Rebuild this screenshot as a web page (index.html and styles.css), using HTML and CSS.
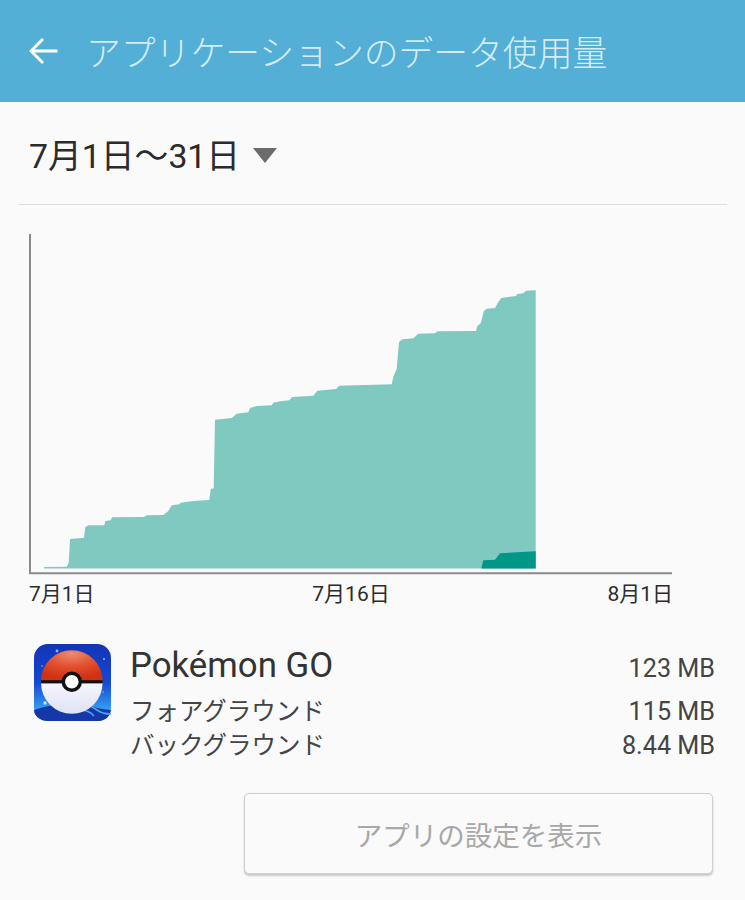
FILE: index.html
```html
<!DOCTYPE html>
<html lang="ja">
<head>
    <meta charset="UTF-8">
    <meta name="viewport" content="width=device-width, initial-scale=1.0">
    <title>アプリケーションのデータ使用量</title>
    <link rel="stylesheet" href="styles.css">
</head>
<body>

    <!-- Barra superior -->
    <header class="appbar">
        <svg class="back" width="30" height="30" viewBox="0 0 30 30">
            <path d="M28.5 15H2.5M14 3L2 15l12 12" fill="none" stroke="#fff" stroke-width="3"/>
        </svg>
        <h1>アプリケーションのデータ使用量</h1>
    </header>

    <div class="period">
        <span>7月1日〜31日</span>
        <i class="caret"></i>
    </div>

    <!-- Gráfico: el viewBox usa las coordenadas de la pantalla -->
    <svg class="chart" width="745" height="372" viewBox="0 205 745 372">
        <path fill="#80c9c1" d="M44 567L66.7 566.7L68.7 563L70 539L84 537.7L85.3 527L88.3 525.3L104.3 525.3L105.3 521L110.7 520.3L112 517.3L144 517L146.7 515.3L163.3 515L168.3 511L171.7 505.3L179.3 504.3L180.7 502.7L193.3 501L209.3 500L210.7 489L213.7 488.3L215 419.7L231.7 418L236.7 413.7L248.3 412.3L250 408L256.7 406L271.7 405.3L273.3 402.7L280 401.3L289.3 400.3L292 397L313.3 395.7L317.3 390.7L336 389L339.3 385.7L391.7 384.3L393.3 376.7L396.7 369L399 342L402.3 339.3L413.3 338.3L418.3 333.7L435 333.3L437.3 331.3L476 331L477.3 326L480.7 323.3L484 310.7L486.7 308.7L495 308L498.3 302L501.3 298L516 296L517.3 294L523.3 293.3L526 290.7L535.7 290.3V568.5H44Z"/>
        <path fill="#009688" d="M481.3 568.5L483.3 560.3L495 559.7L500 553.3L516.7 552.3L535.7 551.3V568.5Z"/>
        <path fill="none" stroke="#8a8a8a" stroke-width="2" d="M30 234V573.3H672"/>
    </svg>

    <div class="axis-labels">
        <span>7月1日</span>
        <span>7月16日</span>
        <span>8月1日</span>
    </div>

    <!-- Resumen de la app -->
    <section class="usage">
        <svg class="app-icon" width="77" height="78" viewBox="0 0 77 78">
            <defs>
                <linearGradient id="sky" x1="0" y1="0" x2="0" y2="1">
                    <stop offset="0" stop-color="#1234b4"/>
                    <stop offset="0.5" stop-color="#1648d2"/>
                    <stop offset="0.78" stop-color="#2f8cec"/>
                    <stop offset="0.88" stop-color="#3aa4f2"/>
                </linearGradient>
                <radialGradient id="red" cx="0.5" cy="0.1" r="0.8">
                    <stop offset="0" stop-color="#ee8c70"/>
                    <stop offset="0.55" stop-color="#e2502e"/>
                    <stop offset="1" stop-color="#d03212"/>
                </radialGradient>
                <linearGradient id="pale" x1="0" y1="0" x2="0" y2="1">
                    <stop offset="0" stop-color="#f6f6fc"/>
                    <stop offset="1" stop-color="#dfe2f6"/>
                </linearGradient>
            </defs>
            <rect width="77" height="77" rx="14" fill="url(#sky)"/>
            <path d="M0 66c14-5 34-8 50-5 8 1 14 4 27 5v-1 0c0 7-6 12-12 12H14C6 77 0 72 0 66z" fill="#1538a8"/>
            <path d="M47 60c8 1 12 3 16 6 4 3 9 4 14 4M45 66c8 0 12 2 15 6" fill="none" stroke="#4ea6ee" stroke-width="1.6"/>
            <circle cx="11" cy="59" r="1.7" fill="#c0e8ff"/>
            <circle cx="23" cy="7" r="1.4" fill="#8fb8f5"/>
            <circle cx="70" cy="15" r="1" fill="#8fb8f5"/>
            <circle cx="8" cy="22" r="0.8" fill="#8fb8f5"/>
            <circle cx="69" cy="48" r="0.8" fill="#8fb8f5"/>
            <path d="M7 37a30.8 30.8 0 0 1 61.6 0z" fill="url(#red)"/>
            <path d="M7 39a30.8 30.8 0 0 0 61.6 0z" fill="url(#pale)"/>
            <rect x="7" y="36.2" width="61.6" height="3.2" fill="#111"/>
            <circle cx="37.8" cy="37.8" r="10.2" fill="#111"/>
            <circle cx="37.8" cy="37.8" r="6.8" fill="#fff"/>
        </svg>
        <div class="usage-rows">
            <div class="row row-main"><span>Pokémon GO</span><span class="amount">123 MB</span></div>
            <div class="row"><span>フォアグラウンド</span><span class="amount">115 MB</span></div>
            <div class="row"><span>バックグラウンド</span><span class="amount">8.44 MB</span></div>
        </div>
    </section>

    <button class="settings" disabled>アプリの設定を表示</button>

</body>
</html>
```

FILE: styles.css
```css
/* Estilo global */
* {
    margin: 0;
    padding: 0;
    box-sizing: border-box;
}

body {
    font-family: Roboto, "Noto Sans CJK JP", sans-serif;
    background-color: #fafafa;
    color: #2b2b2b;
    width: 745px;
    height: 900px;
    overflow: hidden;
}

/* Barra superior */
.appbar {
    height: 102px;
    background-color: #53afd6;
    display: flex;
    align-items: center;
    padding-left: 29px;
    gap: 27px;
}

.back {
    flex-shrink: 0;
}

.appbar h1 {
    font-size: 34.8px;
    font-weight: 300;
    color: #d5ecf5;
    white-space: nowrap;
}

/* Selector de periodo */
.period {
    height: 103px;
    margin: 0 18px;
    padding-left: 11px;
    display: flex;
    align-items: center;
    gap: 13px;
    font-size: 33.8px;
    border-bottom: 1px solid #dedede;
}

.caret {
    width: 0;
    height: 0;
    margin-top: 4px;
    border-left: 12px solid transparent;
    border-right: 12px solid transparent;
    border-top: 15px solid #6b6b6b;
}

/* Gráfico */
.chart {
    display: block;
}

.axis-labels {
    display: flex;
    justify-content: space-between;
    padding: 3px 72px 0 29px;
    font-size: 21px;
    line-height: 28px;
}

/* Resumen */
.usage {
    display: flex;
    padding: 36px 30px 0 34px;
    gap: 19px;
}

.usage-rows {
    flex: 1;
}

.row {
    display: flex;
    justify-content: space-between;
    align-items: baseline;
    font-size: 24.5px;
    line-height: 34px;
    color: #444;
}

.row-main {
    height: 42px;
    margin-bottom: 9px;
    font-size: 34.8px;
    line-height: 42px;
    color: #333;
}

.amount {
    font-size: 25.2px;
    color: #444;
}

.settings {
    display: block;
    width: 469px;
    height: 81px;
    margin: 30px 0 0 244px;
    background-color: #fafafa;
    border: 1.5px solid #d0d0d0;
    border-radius: 5px;
    box-shadow: 0 1.5px 2px rgba(0, 0, 0, 0.2);
    font-family: inherit;
    font-size: 27.5px;
    color: #a8a8a8;
}
```
